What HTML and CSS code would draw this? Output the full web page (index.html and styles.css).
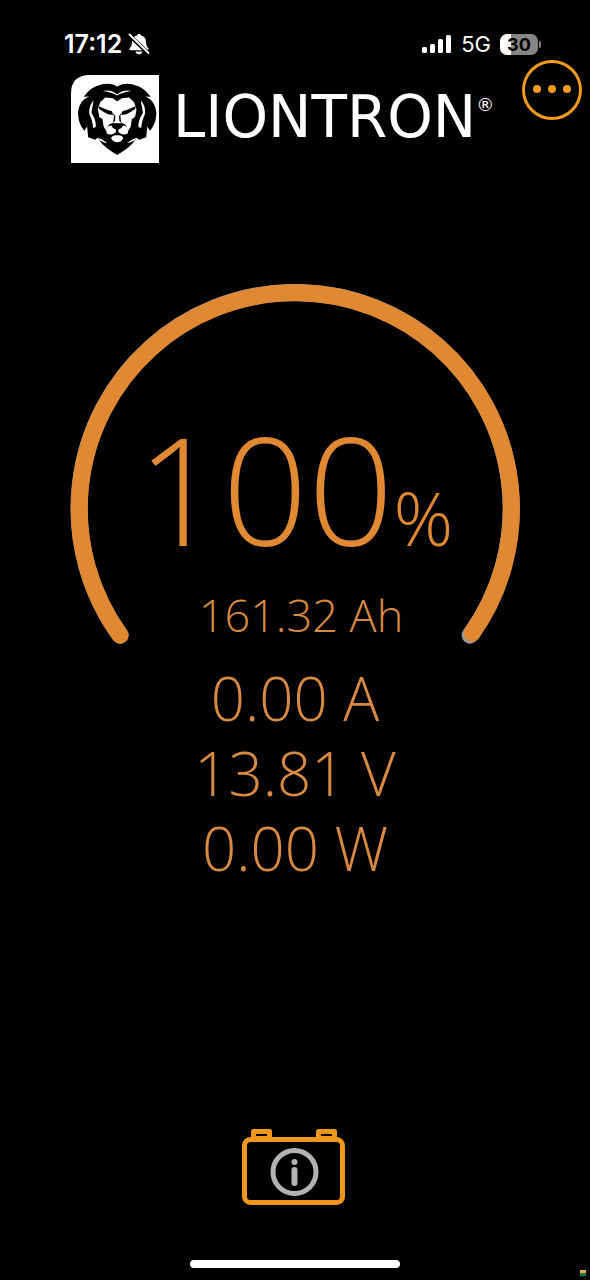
FILE: index.html
```html
<!DOCTYPE html>
<html lang="en">
<head>
  <meta charset="UTF-8"/>
  <meta name="viewport" content="width=device-width, initial-scale=1.0"/>
  <title>Liontron</title>
  <link rel="stylesheet" href="styles.css">
</head>
<body>
  <div class="status-bar">
    <span class="time">17:12</span>
    <svg class="bell" viewBox="0 0 22 22" width="22" height="22" aria-hidden="true">
      <path d="M11 1c-1.200 0-1.900.7-2 1.500-3.300.8-5 3-5 6.300 0 3.500-.8 4.700-2.200 6.300-.7.900-.3 2.200.8 2.200h16.800c1.100 0 1.500-1.300.8-2.200-1.400-1.600-2.200-2.800-2.200-6.300 0-3.300-1.700-5.500-5-6.300-.1-.8-.8-1.500-2-1.500z" fill="#fff"/>
      <path d="M7.500 18.500h7c-.4 1.700-1.700 2.700-3.500 2.700s-3.100-1-3.500-2.700z" fill="#fff"/>
      <path d="M1 2l20 19" stroke="#000" stroke-width="4"/>
      <path d="M1.500 1.500l19 18.500" stroke="#fff" stroke-width="1.800" stroke-linecap="round"/>
    </svg>
    <svg class="signal" viewBox="0 0 30 18" width="30" height="18" aria-hidden="true">
      <rect x="0" y="12" width="5" height="6" rx="1.500"/>
      <rect x="8" y="9" width="5" height="9" rx="1.500"/>
      <rect x="16" y="4" width="5" height="14" rx="1.500"/>
      <rect x="24" y="0" width="5" height="18" rx="1.500"/>
    </svg>
    <span class="network">5G</span>
    <span class="battery-level">30</span>
  </div>

  <header class="header">
    <svg class="logo" viewBox="36 27 262 262" aria-hidden="true">
      <defs>
        <g id="half">
          <path fill="#000" d="M174 62C160 50 135 50 112 60C98 66 86 75 74 92L90 91C68 100 58 118 57 142C58 165 65 180 76 193L84 180L87 212L108 220L116 214C126 232 142 247 174 265z"/>
          <path d="M174 106L160 96L138 94L123 108L116 130L120 151L130 159L133 180L141 194L147 177L156 172H174z"/>
          <path fill="#000" d="M119 120L145 131L158 135L161 146L146 144L131 136L120 128z"/>
          <path fill="#000" d="M158 137L164 148L162 166L158 172L167 164L168 148z"/>
          <path d="M103 103C91 116 89 132 91 144C97 157 101 171 102 185L110 182C111 164 104 151 97 140C98 127 102 117 103 103z"/>
          <path d="M130 75C146 70 162 75 174 85V88C160 80 146 77 130 75z"/>
          <path fill="#000" d="M150 174L159 171H174V198L166 206L154 210L144 200z"/>
          <path d="M141 190C143 181 149 177 156 177L160 184L170 190V197C163 205 151 206 142 201z"/>
          <path d="M174 207C163 205 156 210 156 215C159 223 165 227 174 227z"/>
          <path d="M116 213L128 219L144 229L137 229L122 222z"/>
        </g>
      </defs>
      <path d="M36 289V83Q36 27 92 27H298V289z"/>
      <use href="#half"/>
      <use href="#half" transform="translate(347 0) scale(-1 1)"/>
    </svg>
    <h1 class="brand">LIONTRON<sup>®</sup></h1>
    <button class="menu" type="button" aria-label="Menu">
      <svg viewBox="0 0 60 60" width="60" height="60" aria-hidden="true">
        <circle cx="30" cy="30" r="28.500" fill="none" stroke="#f09a1e" stroke-width="3"/>
        <circle cx="15" cy="29" r="4" fill="#f09a1e"/>
        <circle cx="30" cy="29" r="4" fill="#f09a1e"/>
        <circle cx="45" cy="29" r="4" fill="#f09a1e"/>
      </svg>
    </button>
  </header>

  <main class="main">
    <section class="gauge">
      <svg class="arc" viewBox="0 0 450 361" aria-hidden="true">
        <g fill="none" stroke-width="17" stroke-linecap="round">
          <path d="M50 351A216 216 0 1 1 400 351" stroke="#999"/>
          <path d="M50 351A216 216 0 1 1 402 349" stroke="#e08832"/>
        </g>
      </svg>
      <div class="charge">
        <p class="percent">100<span class="unit">%</span></p>
        <p class="capacity">161.32 Ah</p>
      </div>
    </section>
    <section class="readings">
      <p>0.00 A</p>
      <p>13.81 V</p>
      <p>0.00 W</p>
    </section>
  </main>

  <footer class="footer">
    <button class="info" type="button" aria-label="Battery info">
      <svg viewBox="0 0 106 78" width="106" height="78" aria-hidden="true">
        <g fill="none" stroke="#f0961a" stroke-width="5">
          <rect x="2.500" y="11.500" width="98" height="63" rx="6"/>
          <path d="M11.500 11V3.500H27.500V11M76.500 11V3.500H92.500V11" stroke-linejoin="round"/>
          <path d="M10 9H29M75 9H94" stroke-width="2"/>
        </g>
        <circle cx="52.500" cy="44" r="21.500" fill="none" stroke="#b3b3b3" stroke-width="5"/>
        <circle cx="52.500" cy="34" r="3" fill="#b3b3b3"/>
        <path d="M52.500 42V55" stroke="#b3b3b3" stroke-width="6" stroke-linecap="round"/>
      </svg>
    </button>
    <div class="home-bar"></div>
  </footer>
  <span class="marker"></span>
</body>
</html>
```

FILE: styles.css
```css
* {
  box-sizing: border-box;
}
body {
  margin: 0;
  min-height: 100vh;
  display: flex;
  flex-direction: column;
  position: relative;
  background-color: #000;
  color: #d98a42;
  font-family: "Open Sans", sans-serif;
  font-weight: 300;
}
h1, p {
  margin: 0;
}
button {
  padding: 0;
  border: none;
  background: none;
  cursor: pointer;
}
svg {
  display: block;
}
.status-bar {
  display: flex;
  align-items: center;
  height: 60px;
  padding: 28px 52px 0 64px;
  color: #fff;
  font-family: Inter, sans-serif;
}
.time {
  font-size: 25px;
  font-weight: 600;
}
.bell {
  margin-left: 6px;
}
.signal {
  margin-left: auto;
  fill: #fff;
}
.network {
  margin: 0 9px;
  font-size: 22px;
  font-weight: 400;
}
.battery-level {
  position: relative;
  width: 38px;
  border-radius: 7px;
  background: linear-gradient(to right, #fff 30%, #858585 30%);
  color: #000;
  font-size: 18px;
  font-weight: 700;
  line-height: 21px;
  text-align: center;
}
.battery-level::after {
  content: "";
  position: absolute;
  top: 7px;
  right: -3px;
  width: 2px;
  height: 7px;
  border-radius: 0 2px 2px 0;
  background-color: #858585;
}
.header {
  display: flex;
  align-items: flex-start;
  padding: 0 8px 0 71px;
}
.logo {
  flex: none;
  width: 88px;
  height: 88px;
  margin-top: 15px;
  fill: #fff;
}
.brand {
  display: flex;
  margin: 29px 0 0 14px;
  color: #fff;
  font-family: "DejaVu Sans", sans-serif;
  font-size: 58px;
  font-weight: 400;
  line-height: 56px;
}
.brand sup {
  font-size: 18px;
  line-height: 32px;
}
.menu {
  flex: none;
  margin-left: auto;
}
.main {
  padding-top: 121px;
  text-align: center;
}
.gauge {
  display: grid;
  width: 76.3%;
  margin: 0 auto;
}
.arc,
.charge {
  grid-area: 1 / 1;
}
.arc {
  width: 100%;
}
.charge {
  align-self: end;
}
.percent {
  color: #e08832;
  font-size: 150px;
  line-height: 150px;
}
.unit {
  font-size: 74px;
  line-height: 75px;
}
.capacity {
  margin-top: 22px;
  font-size: 45px;
  line-height: 60px;
  padding-left: 12px;
}
.readings {
  margin-top: 16px;
  font-size: 60px;
  line-height: 75px;
}
.footer {
  display: flex;
  flex-direction: column;
  align-items: center;
  gap: 54px;
  margin-top: auto;
  padding-bottom: 12px;
}
.home-bar {
  width: 210px;
  height: 8px;
  border-radius: 4px;
  background-color: #fff;
}
.marker {
  position: absolute;
  right: 4px;
  bottom: 4px;
  width: 6px;
  height: 6px;
  background: linear-gradient(#e0b04c 50%, #198052 50%);
}
```
